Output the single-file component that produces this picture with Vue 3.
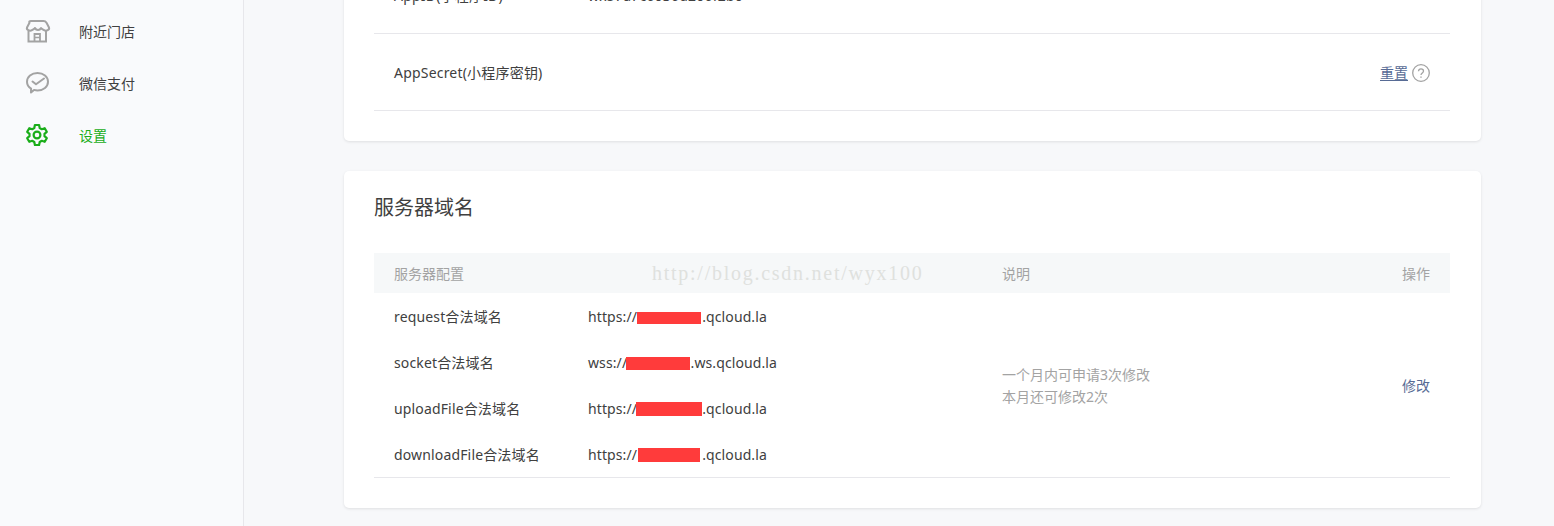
<script setup>
const menu = [
  { key: 'store', label: '附近门店' },
  { key: 'pay', label: '微信支付' },
  { key: 'gear', label: '设置', active: true }
]
const rows = [
  { name: 'request合法域名', pre: 'https://', post: '.qcloud.la', cls: 'r1' },
  { name: 'socket合法域名', pre: 'wss://', post: '.ws.qcloud.la', cls: 'r2' },
  { name: 'uploadFile合法域名', pre: 'https://', post: '.qcloud.la', cls: 'r3' },
  { name: 'downloadFile合法域名', pre: 'https://', post: '.qcloud.la', cls: 'r4' }
]
</script>

<template>
  <div class="page">
    <aside class="side">
      <a v-for="m in menu" :key="m.key" class="item" :class="{ on: m.active }">
        <svg v-if="m.key === 'store'" class="ico" viewBox="0 0 26 24" fill="none" stroke="#a3a3a3" stroke-width="2">
          <path d="M6 2h12.500c1.500 0 2.300.6 3 1.800l2.500 4.700c.8 2-2.500 4.300-5 2.700-1.800-1.100-2.500-1.400-3-2.200-1.200 2.600-4.800 2.600-6 0-.5.800-1.200 1.100-3 2.200-2.500 1.600-5.800-.7-5-2.700l2.500-4.700C3.700 2.600 4.500 2 6 2z" stroke-linejoin="round"/>
          <path d="M3.500 12v10.500h17.500V12"/>
          <path d="M9.500 22.500v-7.500h5.500v7.500" stroke-width="1.800"/>
          <path d="M9.500 18.500h5.500" stroke-width="1.500"/>
        </svg>
        <svg v-else-if="m.key === 'pay'" class="ico" viewBox="0 0 26 24" fill="none" stroke="#a3a3a3" stroke-width="2">
          <path d="M12.500 2c6 0 10.500 3.700 10.500 8.700s-4.500 8.700-10.500 8.700c-1.300 0-2.400-.2-3.500-.5L6 21.500l.1-3.900C3.400 16 2 13.500 2 10.700 2 5.700 6.500 2 12.500 2z" stroke-linejoin="round"/>
          <path d="M7.500 10.500l3.500 2.800L19 7.500" stroke-linecap="round" stroke-linejoin="round"/>
        </svg>
        <svg v-else class="ico gear" viewBox="0 0 24 24" fill="none" stroke="#1aad19" stroke-width="2.200">
          <path stroke-linejoin="round" d="M9.900 2h4.200l.6 3 2.100 1.200 2.900-1 2.100 3.600-2.300 2v2.400l2.300 2-2.100 3.600-2.900-1-2.100 1.200-.6 3H9.900l-.6-3-2.100-1.200-2.900 1-2.100-3.600 2.300-2v-2.400l-2.300-2 2.100-3.600 2.900 1 2.100-1.200z"/>
          <circle cx="12" cy="12" r="3.400"/>
        </svg>
        <span class="label">{{ m.label }}</span>
      </a>
    </aside>

    <main class="main">
      <section class="card first">
        <div class="kv">
          <span class="k">AppID(小程序ID)</span>
          <span class="v">wx57a7c6036d206f2b0</span>
        </div>
        <div class="kv">
          <span class="k">AppSecret(小程序密钥)</span>
          <span class="act">
            <a class="link">重置</a>
            <svg class="help" viewBox="0 0 18 18" fill="none" stroke="#a3a3a3">
              <circle cx="9" cy="9" r="8.300" stroke-width="1.300"/>
              <path d="M6.500 7.200C6.600 5.700 7.700 4.800 9 4.800c1.400 0 2.500.9 2.500 2.200 0 1.800-2.500 2-2.500 4" stroke-width="1.300"/>
              <path d="M9 12.400v1.300" stroke-width="1.400"/>
            </svg>
          </span>
        </div>
      </section>

      <section class="card second">
        <h2>服务器域名</h2>
        <div class="table">
          <div class="thead">
            <span class="c1">服务器配置</span>
            <span class="c3">说明</span>
            <span class="c4">操作</span>
            <span class="mark">http://blog.csdn.net/wyx100</span>
          </div>
          <div class="tbody">
            <div class="names">
              <div v-for="r in rows" :key="r.name" class="row">
                <span class="c1">{{ r.name }}</span>
                <span class="url">{{ r.pre }}<i class="red" :class="r.cls"></i>{{ r.post }}</span>
              </div>
            </div>
            <div class="note">一个月内可申请3次修改<br>本月还可修改2次</div>
            <a class="link edit">修改</a>
          </div>
        </div>
      </section>
    </main>
  </div>
</template>

<style scoped>
.page {
  display: flex;
  height: 526px;
  overflow: hidden;
  background: #f7f8fa;
  color: #404040;
  font: 14px/20px "Noto Sans", "Noto Sans CJK SC", sans-serif;
}
.side {
  width: 243px;
  flex: none;
  padding-top: 5px;
  background: #f9fafc;
  border-right: 1px solid #e7e7eb;
}
.item {
  display: flex;
  align-items: center;
  height: 52px;
  padding-left: 25px;
  color: #404040;
}
.item.on { color: #1aad19; }
.label { padding-top: 2px; }
.ico { width: 26px; height: 24px; margin-right: 28px; flex: none; }
.gear { margin-left: -1px; margin-right: 29px; }
.main { flex: 1; padding-left: 100px; padding-right: 73px; }
.card {
  background: #fff;
  border-radius: 5px;
  box-shadow: 0 1px 3px rgba(0, 0, 0, .1);
  padding: 0 31px 0 30px;
}
.first { margin-top: -43px; height: 184px; }
.kv {
  display: flex;
  align-items: center;
  justify-content: space-between;
  box-sizing: border-box;
  height: 77px;
  padding: 2px 20px 0;
  border-bottom: 1px solid #e7e7eb;
  letter-spacing: .2px;
}
.kv:first-child { justify-content: flex-start; }
.k { width: 194px; }
.act { display: flex; align-items: center; gap: 4px; letter-spacing: 0; }
.help { width: 18px; height: 18px; }
.link { color: #576b95; text-decoration: none; }
.act .link { text-decoration: underline; text-underline-offset: 2px; }
.second { margin-top: 30px; height: 337px; }
h2 {
  margin: 0;
  padding-top: 23px;
  height: 82px;
  box-sizing: border-box;
  font-size: 20px;
  line-height: 28px;
  font-weight: 400;
}
.thead {
  position: relative;
  display: flex;
  align-items: center;
  box-sizing: border-box;
  height: 40px;
  padding: 1px 20px 0;
  background: #f6f8f9;
  color: #a3a3a3;
}
.thead .c1 { width: 608px; }
.c3 { flex: 1; }
.mark {
  position: absolute;
  left: 278px;
  top: 10px;
  font: 20px/20px "Liberation Serif", serif;
  letter-spacing: 1.740px;
  white-space: nowrap;
  color: #dfe1de;
}
.tbody {
  display: flex;
  align-items: center;
  height: 184px;
  padding: 0 20px;
  border-bottom: 1px solid #e7e7eb;
}
.names { width: 608px; flex: none; padding-top: 2px; }
.row { display: flex; align-items: center; height: 46px; }
.row .c1 { width: 194px; letter-spacing: .15px; }
.url { letter-spacing: .1px; }
.red { display: inline-block; background: #ff3b3b; vertical-align: -2px; }
.r1 { width: 64px; height: 12px; margin: 0 1px 0 .2px; }
.r2 { width: 64px; height: 13px; margin: 0 1px 0 -1.600px; }
.r3 { width: 66px; height: 14px; margin: 0 0 0 -.8px; }
.r4 { width: 62px; height: 14px; margin: 0 2px 0 1.200px; }
.note { flex: 1; color: #a3a3a3; line-height: 22px; padding-top: 2px; }
.edit { padding-top: 2px; }
</style>
